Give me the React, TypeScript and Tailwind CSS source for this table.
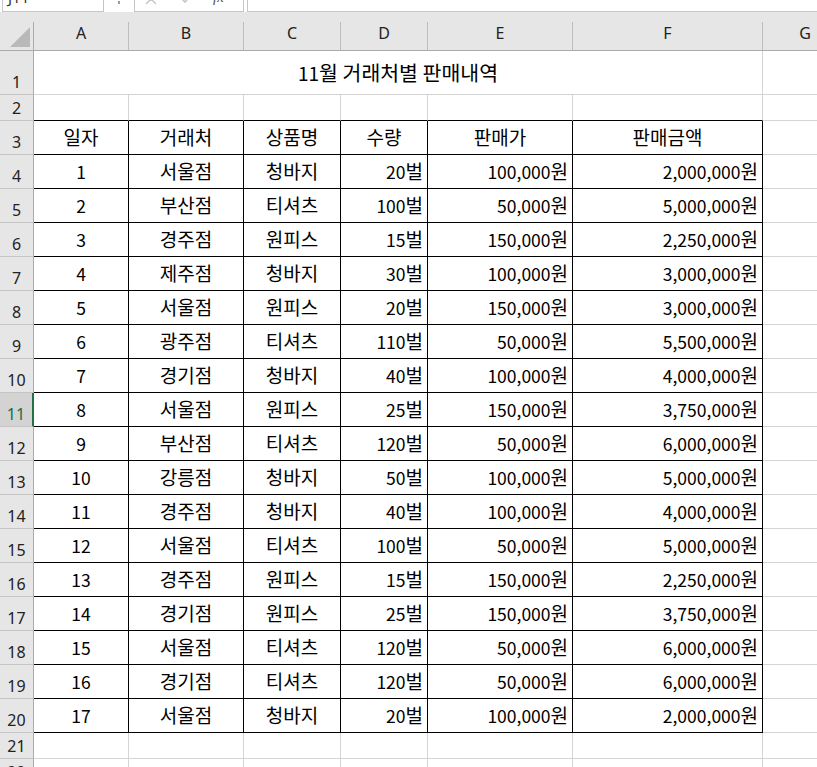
import React from "react";

type Row = [string, string, string, string, string, string];

const data: Row[] = [
  ["1", "서울점", "청바지", "20벌", "100,000원", "2,000,000원"],
  ["2", "부산점", "티셔츠", "100벌", "50,000원", "5,000,000원"],
  ["3", "경주점", "원피스", "15벌", "150,000원", "2,250,000원"],
  ["4", "제주점", "청바지", "30벌", "100,000원", "3,000,000원"],
  ["5", "서울점", "원피스", "20벌", "150,000원", "3,000,000원"],
  ["6", "광주점", "티셔츠", "110벌", "50,000원", "5,500,000원"],
  ["7", "경기점", "청바지", "40벌", "100,000원", "4,000,000원"],
  ["8", "서울점", "원피스", "25벌", "150,000원", "3,750,000원"],
  ["9", "부산점", "티셔츠", "120벌", "50,000원", "6,000,000원"],
  ["10", "강릉점", "청바지", "50벌", "100,000원", "5,000,000원"],
  ["11", "경주점", "청바지", "40벌", "100,000원", "4,000,000원"],
  ["12", "서울점", "티셔츠", "100벌", "50,000원", "5,000,000원"],
  ["13", "경주점", "원피스", "15벌", "150,000원", "2,250,000원"],
  ["14", "경기점", "원피스", "25벌", "150,000원", "3,750,000원"],
  ["15", "서울점", "티셔츠", "120벌", "50,000원", "6,000,000원"],
  ["16", "경기점", "티셔츠", "120벌", "50,000원", "6,000,000원"],
  ["17", "서울점", "청바지", "20벌", "100,000원", "2,000,000원"],
];

const widths = ["w-[95px]", "w-[115px]", "w-[97px]", "w-[87px]", "w-[145px]", "w-[190px]"];
const letters = ["A", "B", "C", "D", "E", "F"];

function Mixed({ text, title }: { text: string; title?: boolean }) {
  const parts = text.split(/([0-9,]+)/).filter((p) => p.length > 0);
  return (
    <span>
      {parts.map((p, i) =>
        /^[0-9,]+$/.test(p) ? (
          <span key={i} className={title ? "text-[19px]" : "text-[17.5px]"}>
            {p}
          </span>
        ) : (
          <span key={i} className={title ? "text-[20.5px]" : "text-[19px]"}>
            {p}
          </span>
        )
      )}
    </span>
  );
}

function RowHeader({ n, active, h }: { n: number; active?: boolean; h: string }) {
  return (
    <div
      className={
        active
          ? `${h} w-[34px] shrink-0 flex items-end justify-center pb-[2px] bg-[#d3d3d3] border-b border-b-[#c4c4c4] border-r-2 border-r-[#217346] text-[#1d6b40] font-['Noto_Sans',sans-serif] text-[16px] leading-[20px]`
          : `${h} w-[34px] shrink-0 flex items-end justify-center pb-[2px] bg-[#e6e6e6] border-b border-b-[#c4c4c4] border-r border-r-[#ababab] text-[#222] font-['Noto_Sans',sans-serif] text-[16px] leading-[20px]`
      }
    >
      {n}
    </div>
  );
}

function GridCell({ w, black }: { w: string; black?: boolean }) {
  return (
    <div
      className={
        black
          ? `${w} shrink-0 border-r border-b border-r-[#d4d4d4] border-b-black`
          : `${w} shrink-0 border-r border-b border-r-[#d4d4d4] border-b-[#d4d4d4]`
      }
    />
  );
}

function TableCell({ w, text, right }: { w: string; text: string; right?: boolean }) {
  return (
    <div
      className={
        right
          ? `${w} shrink-0 flex items-center justify-end pr-[4px] border-r border-b border-r-black border-b-black`
          : `${w} shrink-0 flex items-center justify-center border-r border-b border-r-black border-b-black`
      }
    >
      <Mixed text={text} />
    </div>
  );
}

export default function App() {
  return (
    <div className="w-[817px] h-[767px] overflow-hidden bg-white font-['Noto_Sans_CJK_KR',sans-serif] text-[17.5px] text-black leading-[24px]">
      {/* formula bar strip */}
      <div className="h-[12px] flex bg-white">
        <div className="ml-[2px] w-[102px] h-[12px] border-x border-b border-[#c6c6c6] overflow-hidden bg-white">
          <div className="mt-[-13px] ml-[5px] font-['Noto_Sans',sans-serif] text-[15px] leading-[20px] text-[#333]">J11</div>
        </div>
        <div className="w-[30px] flex justify-center">
          <div className="mt-[1px] w-[2px] h-[3px] bg-[#9a9a9a]" />
        </div>
        <div className="w-[110px] h-[12px] border-x border-b border-[#c6c6c6] overflow-hidden flex items-start bg-white">
          <div className="ml-[8px] mt-[-9px] w-[16px] h-[16px] text-[#c8c8c8]">
            <svg viewBox="0 0 16 16" className="w-[16px] h-[16px]" fill="none" stroke="currentColor" strokeWidth="1.5">
              <path d="M3 3 L13 13 M13 3 L3 13" />
            </svg>
          </div>
          <div className="ml-[20px] mt-[-10px] w-[16px] h-[16px] text-[#c8c8c8]">
            <svg viewBox="0 0 16 16" className="w-[16px] h-[16px]" fill="none" stroke="currentColor" strokeWidth="1.6">
              <path d="M2 8 L6 12 L14 3" />
            </svg>
          </div>
          <div className="ml-[18px] mt-[-13px] font-['Liberation_Serif',serif] italic text-[15px] leading-[20px] text-[#555]">fx</div>
        </div>
        <div className="ml-[3px] flex-1 h-[12px] border-l border-b border-[#c6c6c6] bg-white" />
      </div>

      {/* column headers */}
      <div className="h-[39px] flex bg-[#e6e6e6] border-b border-b-[#ababab] font-['Noto_Sans',sans-serif] text-[16px] text-[#222]">
        <div className="w-[34px] shrink-0 flex">
          <svg viewBox="0 0 33 38" className="w-[33px] h-[38px]">
            <path d="M30 15 L30 35 L10 35 Z" fill="#b9b9b9" />
          </svg>
          <div className="w-px h-[28px] self-end bg-[#ababab]" />
        </div>
        {letters.map((l, i) => (
          <div key={l} className={`${widths[i]} shrink-0 flex`}>
            <div className="flex-1 flex items-center justify-center pt-[4px]">{l}</div>
            <div className="w-px h-[28px] self-end bg-[#bdbdbd]" />
          </div>
        ))}
        <div className="flex-1 flex items-center justify-center pt-[4px] pl-[30px]">G</div>
      </div>

      {/* row 1 */}
      <div className="flex">
        <RowHeader n={1} h="h-[44px]" />
        <div className="w-[729px] h-[44px] shrink-0 flex items-center justify-center border-r border-b border-r-[#d4d4d4] border-b-[#d4d4d4]">
          <Mixed text="11월 거래처별 판매내역" title />
        </div>
        <div className="flex-1 h-[44px] border-b border-b-[#d4d4d4]" />
      </div>

      {/* row 2 */}
      <div className="flex h-[26px]">
        <RowHeader n={2} h="h-[26px]" />
        {widths.map((w) => (
          <GridCell key={w} w={w} black />
        ))}
        <div className="flex-1 border-b border-b-[#d4d4d4]" />
      </div>

      {/* row 3 header */}
      <div className="flex h-[34px]">
        <RowHeader n={3} h="h-[34px]" />
        {["일자", "거래처", "상품명", "수량", "판매가", "판매금액"].map((t, i) => (
          <TableCell key={t} w={widths[i]} text={t} />
        ))}
        <div className="flex-1 border-b border-b-[#d4d4d4]" />
      </div>

      {data.map((r, idx) => (
        <div key={idx} className="flex h-[34px]">
          <RowHeader n={idx + 4} h="h-[34px]" active={idx + 4 === 11} />
          {r.map((t, i) => (
            <TableCell key={i} w={widths[i]} text={t} right={i >= 3} />
          ))}
          <div className="flex-1 border-b border-b-[#d4d4d4]" />
        </div>
      ))}

      {/* row 21 */}
      <div className="flex h-[26px]">
        <RowHeader n={21} h="h-[26px]" />
        {widths.map((w) => (
          <GridCell key={w} w={w} />
        ))}
        <div className="flex-1 border-b border-b-[#d4d4d4]" />
      </div>
      {/* row 22 */}
      <div className="flex h-[26px]">
        <RowHeader n={22} h="h-[26px]" />
        {widths.map((w) => (
          <GridCell key={w} w={w} />
        ))}
        <div className="flex-1 border-b border-b-[#d4d4d4]" />
      </div>
    </div>
  );
}
